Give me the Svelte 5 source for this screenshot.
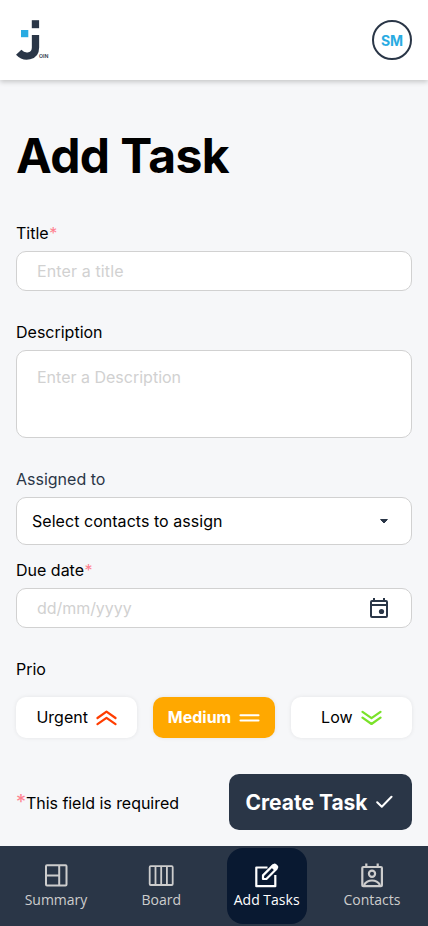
<script>
  let title = $state('');
  let description = $state('');
  let dueDate = $state('');
  let prio = $state('medium');
</script>

<div class="app">
  <header>
    <svg class="logo" width="34" height="42" viewBox="0 0 34 42" role="img" aria-label="Join">
      <rect x="15.800" y="1.200" width="7.300" height="8" fill="#2a3647" />
      <rect x="5" y="11" width="7.300" height="7.200" fill="#29abe2" />
      <path d="M19.500 16V28.500C19.500 38 8.500 39.500 2.700 33.300" fill="none" stroke="#2a3647" stroke-width="7.300" />
      <text x="23" y="39.400" font-size="5.200" font-family="Inter, sans-serif" font-weight="600" fill="#2a3647">OIN</text>
    </svg>
    <button class="avatar">SM</button>
  </header>

  <main>
    <h1>Add Task</h1>

    <label for="title">Title<span class="star">*</span></label>
    <input id="title" class="box" placeholder="Enter a title" bind:value={title} />

    <label for="desc" class="spaced">Description</label>
    <textarea id="desc" class="box" placeholder="Enter a Description" bind:value={description}></textarea>

    <label for="assign" class="spaced muted">Assigned to</label>
    <button id="assign" class="box select">
      <span>Select contacts to assign</span>
      <svg width="8" height="6" viewBox="0 0 8 6"><path d="M.6 1.500h6.800L4 5z" fill="#2a3647" stroke="#2a3647" stroke-linejoin="round" /></svg>
    </button>

    <label for="due" class="tight">Due date<span class="star">*</span></label>
    <div class="box date">
      <input id="due" placeholder="dd/mm/yyyy" bind:value={dueDate} />
      <svg width="18" height="20" viewBox="0 0 18 20" fill="#2a3647">
        <path fill-rule="evenodd" d="M3 0h2v2h8V0h2v2h1a2 2 0 0 1 2 2v14a2 2 0 0 1-2 2H2a2 2 0 0 1-2-2V4a2 2 0 0 1 2-2h1zM2 4v2h14V4zM2 8v10h14V8z" />
        <circle cx="11.500" cy="13.500" r="2.600" />
      </svg>
    </div>

    <div class="label spaced">Prio</div>
    <div class="prios">
      <button class:active={prio === 'urgent'} onclick={() => (prio = 'urgent')}>
        Urgent
        <svg width="21" height="16" viewBox="0 0 21 16" fill="none" stroke="#ff3d00" stroke-width="2.200" stroke-linecap="round" stroke-linejoin="round"><path d="M1.500 8 10.500 1.600l9 6.400M1.500 14.200l9-6.400 9 6.400" /></svg>
      </button>
      <button class:active={prio === 'medium'} onclick={() => (prio = 'medium')}>
        Medium
        <svg width="21" height="16" viewBox="0 0 21 16" fill="none" stroke={prio === 'medium' ? '#fff' : '#ffa800'} stroke-width="2.100" stroke-linecap="round"><path d="M1.500 5.300h18M1.500 10.500h18" /></svg>
      </button>
      <button class:active={prio === 'low'} onclick={() => (prio = 'low')}>
        Low
        <svg width="21" height="16" viewBox="0 0 21 16" fill="none" stroke="#7ae229" stroke-width="2.200" stroke-linecap="round" stroke-linejoin="round"><path d="m1.500 1.800 9 6.400 9-6.400M1.500 7.600l9 6.400 9-6.400" /></svg>
      </button>
    </div>

    <div class="bottom">
      <p><span class="star">*</span>This field is required</p>
      <button class="create">
        Create Task
        <svg width="17" height="14" viewBox="0 0 17 14" fill="none" stroke="#fff" stroke-width="2" stroke-linecap="round" stroke-linejoin="round"><path d="m1.200 7.200 4.600 4.600L15.500 1.800" /></svg>
      </button>
    </div>
  </main>

  <nav>
    <a href="#summary">
      <svg width="30" height="30" viewBox="0 0 30 30" fill="none" stroke="currentColor" stroke-width="2"><rect x="5" y="5.300" width="20.500" height="20.200" rx="1" /><path d="M18.200 5v20M5 15.500h13" /></svg>
      Summary
    </a>
    <a href="#board">
      <svg width="30" height="30" viewBox="0 0 30 30" fill="none" stroke="currentColor" stroke-width="1.800"><rect x="3.700" y="6.200" width="23" height="18.800" rx="1" /><path d="M9.500 6v18.500M15.200 6v18.500M20.900 6v18.500" /></svg>
      Board
    </a>
    <a href="#add" class="current">
      <svg width="30" height="30" viewBox="0 0 30 30" fill="none" stroke="currentColor" stroke-width="2.200" stroke-linejoin="round"><path d="M15.500 7.500H4.300V26.200H23.300V15" /><path d="M11 19v-3.600L21 5.400l3.400 3.500-10 10.100z" /><path d="m19.600 6.800 2-2a1.600 1.600 0 0 1 2.200 0l1.300 1.300a1.600 1.600 0 0 1 0 2.200l-2 2z" fill="currentColor" stroke-width="1.500" /></svg>
      Add Tasks
    </a>
    <a href="#contacts">
      <svg width="30" height="30" viewBox="0 0 30 30" fill="none" stroke="currentColor" stroke-width="2.200"><rect x="5.300" y="7" width="19.600" height="19.200" rx="1" /><path d="M9.300 3.500v4M20.700 3.500v4M7 25c3.500-6 12.500-6 16 0" /><circle cx="15" cy="13.800" r="3.100" /></svg>
      Contacts
    </a>
  </nav>
</div>

<style>
  :global(body) {
    margin: 0;
    background: #f6f7f8;
  }
  .app {
    box-sizing: border-box;
    height: 926px;
    display: flex;
    flex-direction: column;
    font: 16px/19px Inter, sans-serif;
    color: #000;
    background: #f6f7f9;
    overflow: hidden;
  }
  header {
    box-sizing: border-box;
    height: 80px;
    padding: 0 16px;
    display: flex;
    align-items: center;
    justify-content: space-between;
    background: #fff;
    box-shadow: 0 2px 5px rgba(0, 0, 0, 0.2);
  }
  button {
    font: inherit;
    color: inherit;
    cursor: pointer;
  }
  .avatar {
    width: 40px;
    height: 40px;
    padding: 0;
    border: 2px solid #2a3647;
    border-radius: 50%;
    background: #fff;
    color: #29abe2;
    font-size: 14px;
    font-weight: 700;
  }
  main {
    flex: 1;
    padding: 47px 16px 0;
    display: flex;
    flex-direction: column;
  }
  h1 {
    margin: 0 0 39px;
    font-size: 48px;
    line-height: 58px;
    font-weight: 700;
    letter-spacing: -0.6px;
  }
  label,
  .label {
    margin-bottom: 8px;
  }
  .spaced {
    margin-top: 32px;
  }
  .tight {
    margin-top: 16px;
  }
  .muted {
    color: #2a3647;
  }
  .star {
    color: #ff8190;
  }
  label .star {
    margin-left: 0.5px;
  }
  .box {
    box-sizing: border-box;
    width: 100%;
    height: 40px;
    padding: 0 20px;
    border: 1px solid #d1d1d1;
    border-radius: 10px;
    background: #fff;
    font: inherit;
    outline: none;
  }
  input.box {
    padding-bottom: 1px;
    letter-spacing: 0.12px;
  }
  ::placeholder {
    color: #d1d1d1;
    opacity: 1;
  }
  textarea.box {
    display: block;
    height: 88px;
    padding: 17px 20px;
    resize: none;
  }
  .select {
    height: 48px;
    padding: 0 23px 0 15px;
    display: flex;
    align-items: center;
    justify-content: space-between;
    letter-spacing: 0.04px;
  }
  .date {
    padding-right: 23px;
    display: flex;
    align-items: center;
  }
  .date input {
    flex: 1;
    min-width: 0;
    padding: 0;
    border: 0;
    outline: none;
    font: inherit;
    letter-spacing: -0.05px;
  }
  .prios {
    display: flex;
    gap: 16px;
    margin-top: 10px;
  }
  .prios button {
    flex: 1 1 0;
    height: 41px;
    padding: 0;
    display: flex;
    align-items: center;
    justify-content: center;
    gap: 8px;
    border: 0;
    border-radius: 10px;
    background: #fff;
    box-shadow: 0 0 4px rgba(0, 0, 0, 0.08);
  }
  .prios button.active {
    background: #ffa800;
    color: #fff;
    font-weight: 700;
  }
  .bottom {
    margin-top: 36px;
    display: flex;
    align-items: center;
    justify-content: space-between;
  }
  p {
    margin: 2px 0 0;
    letter-spacing: -0.04px;
  }
  p .star {
    font-size: 20px;
    line-height: 19px;
  }
  .create {
    height: 56px;
    width: 183px;
    padding: 0 3px 0 0;
    display: flex;
    align-items: center;
    justify-content: center;
    gap: 8px;
    border: 0;
    border-radius: 10px;
    background: #2a3647;
    color: #fff;
    font-size: 21px;
    font-weight: 700;
  }
  nav {
    box-sizing: border-box;
    height: 80px;
    padding: 2px 16px;
    display: flex;
    justify-content: space-between;
    background: #2a3647;
  }
  nav a {
    box-sizing: border-box;
    width: 80px;
    height: 76px;
    padding-top: 11.5px;
    display: flex;
    flex-direction: column;
    align-items: center;
    border-radius: 16px;
    color: #cdcdcd;
    text-decoration: none;
    font: 14px/20px 'Open Sans', sans-serif;
    white-space: nowrap;
  }
  nav a.current {
    background: #091931;
    color: #fff;
  }
</style>
